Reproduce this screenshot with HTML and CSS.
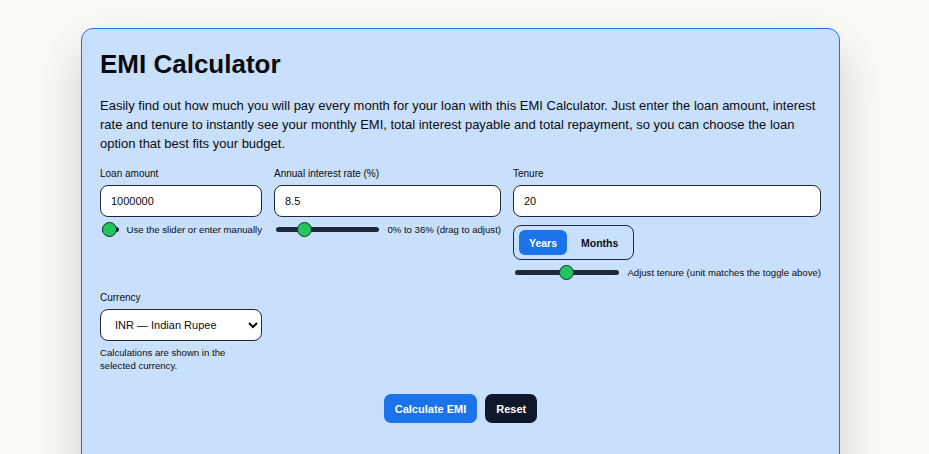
FILE: index.html
```html
<!DOCTYPE html>
<html lang="en">
<head>
<meta charset="utf-8">
<title>EMI Calculator</title>
<link rel="stylesheet" href="styles.css">
</head>
<body>
<main class="card">
  <h1 class="title">EMI Calculator</h1>
  <p class="intro">Easily find out how much you will pay every month for your loan with this EMI Calculator. Just enter the loan amount, interest rate and tenure to instantly see your monthly EMI, total interest payable and total repayment, so you can choose the loan option that best fits your budget.</p>

  <div class="fields">
    <div class="field">
      <label class="label" for="amount">Loan amount</label>
      <input class="input" id="amount" type="text" value="1000000">
      <div class="slider-row">
        <input class="range" type="range" min="1000000" max="50000000" value="1000000">
        <span class="hint">Use the slider or enter manually</span>
      </div>
    </div>

    <div class="field">
      <label class="label" for="rate">Annual interest rate (%)</label>
      <input class="input" id="rate" type="text" value="8.5">
      <div class="slider-row">
        <input class="range" type="range" min="0" max="36" step="0.1" value="8.5">
        <span class="hint">0% to 36% (drag to adjust)</span>
      </div>
    </div>

    <div class="field">
      <label class="label" for="tenure">Tenure</label>
      <input class="input" id="tenure" type="text" value="20">
      <div class="toggle">
        <button class="toggle-btn is-active" type="button">Years</button>
        <button class="toggle-btn" type="button">Months</button>
      </div>
      <div class="slider-row">
        <input class="range" type="range" min="1" max="40" value="20">
        <span class="hint">Adjust tenure (unit matches the toggle above)</span>
      </div>
    </div>

    <div class="field">
      <label class="label" for="currency">Currency</label>
      <select class="select" id="currency">
        <option>INR — Indian Rupee</option>
        <option>USD — US Dollar</option>
        <option>EUR — Euro</option>
      </select>
      <p class="note">Calculations are shown in the selected currency.</p>
    </div>
  </div>

  <div class="actions">
    <button class="btn btn-primary" type="button">Calculate EMI</button>
    <button class="btn btn-dark" type="button">Reset</button>
  </div>
</main>
</body>
</html>
```

FILE: styles.css
```css
html, body {
  margin: 0;
  padding: 0;
}

body {
  background: #fbfaf7;
  font-family: "Liberation Sans", Arial, sans-serif;
  color: #0b0b0f;
}

.card {
  box-sizing: border-box;
  width: 759px;
  margin: 28px 0 0 81px;
  padding: 20px 18px 70px;
  background: #c9e0fd;
  border: 1px solid #1a73e8;
  border-radius: 12px;
  box-shadow: 0 20px 50px rgba(0, 0, 0, 0.18);
}

.title {
  margin: 0 0 17px;
  font-size: 26px;
  line-height: 30px;
  font-weight: 700;
}

.intro {
  margin: 0 0 15px;
  font-size: 13px;
  line-height: 19px;
}

.fields {
  display: grid;
  grid-template-columns: 162px 227px 308px;
  column-gap: 12px;
  row-gap: 12px;
  align-items: start;
}

.field {
  display: flex;
  flex-direction: column;
  min-width: 0;
}

.label {
  display: block;
  font-size: 10px;
  line-height: 12px;
  margin-bottom: 5px;
}

.input,
.select {
  box-sizing: border-box;
  width: 100%;
  height: 32px;
  padding: 0 10px;
  font-family: inherit;
  font-size: 11px;
  color: #0b0b0f;
  background: #ffffff;
  border: 1px solid #1e293b;
  border-radius: 8px;
  outline: none;
}

.slider-row {
  display: flex;
  align-items: center;
  gap: 6px;
  height: 16px;
  margin-top: 4px;
}

.range {
  -webkit-appearance: none;
  appearance: none;
  flex: 0 1 105px;
  min-width: 0;
  height: 16px;
  margin: 0 2px;
  background: transparent;
}

.range::-webkit-slider-runnable-track {
  height: 5px;
  background: #1e293b;
  border-radius: 3px;
}

.range::-webkit-slider-thumb {
  -webkit-appearance: none;
  appearance: none;
  box-sizing: border-box;
  width: 15px;
  height: 15px;
  margin-top: -5px;
  border-radius: 50%;
  background: #22c55e;
  border: 1px solid #1e293b;
}

.hint {
  flex: none;
  white-space: nowrap;
  font-size: 9.6px;
  line-height: 11px;
}

.toggle {
  align-self: flex-start;
  display: flex;
  gap: 4px;
  margin-top: 8px;
  padding: 4px 5px;
  border: 1px solid #1e293b;
  border-radius: 8px;
}

.toggle-btn {
  height: 25px;
  padding: 0 10px;
  font-family: inherit;
  font-size: 10.5px;
  font-weight: 700;
  color: #0b0b0f;
  background: transparent;
  border: 0;
  border-radius: 6px;
}

.toggle-btn.is-active {
  background: #1a73e8;
  color: #ffffff;
}

.note {
  margin: 6px 0 0;
  font-size: 9.6px;
  line-height: 12.5px;
}

.actions {
  display: flex;
  justify-content: center;
  gap: 8px;
  margin-top: 22px;
}

.btn {
  height: 29px;
  padding: 0 11px;
  font-family: inherit;
  font-size: 11px;
  font-weight: 700;
  color: #ffffff;
  border: 0;
  border-radius: 7px;
}

.btn-primary {
  background: #1a73e8;
}

.btn-dark {
  background: #0f172a;
}
```
